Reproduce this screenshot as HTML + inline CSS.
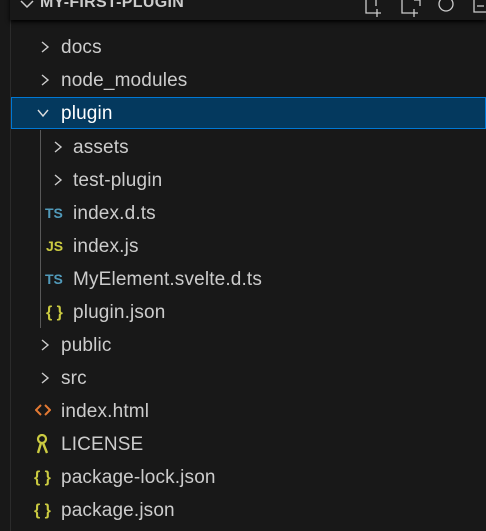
<!DOCTYPE html>
<html><head><style>
body{margin:0;width:486px;height:531px;background:#181818;overflow:hidden;position:relative;font-family:"Segoe UI","Liberation Sans",sans-serif;color:#cccccc}
.hdr{position:absolute;left:10px;top:-10px;width:476px;height:30px;background:#181818;box-shadow:0 2px 4px #000}
.ht{position:absolute;left:40px;top:-6px;font-weight:bold;font-size:16px;color:#cccccc;letter-spacing:0.3px}
.vl{position:absolute;left:10px;top:0;width:1px;height:531px;background:#2b2b2b}
.guide{position:absolute;left:40px;top:130px;width:1px;height:198px;background:#585858}
.row{position:absolute;left:11px;width:475px;height:33px;font-size:19px;line-height:35px;letter-spacing:0.15px}
.row span{position:absolute}
.sel{background:#04395e;outline:1px solid #0078d4;outline-offset:-1px}
.ch{width:12px;height:12px}
.ic{font-weight:bold;font-size:14px;letter-spacing:0}
</style></head><body>
<div class="vl"></div>
<div class="hdr"></div>
<svg style="position:absolute;left:20px;top:0" width="14" height="10"><path d="M1 1 L7 7 L13 1" stroke="#ccc" stroke-width="1.5" fill="none"/></svg>
<div class="ht">MY-FIRST-PLUGIN</div>
<svg style="position:absolute;left:364px;top:0" width="122" height="18" fill="none" stroke="#ccc" stroke-width="1.3">
<path d="M2 0 V13 H10 M12 0 V6 M13 9 V17 M9 13 H17"/>
<path d="M38 0 V13 H46 M50 0 H56 V6 M50 9 V17 M46 13 H54"/>
<circle cx="82" cy="4" r="7"/>
<path d="M110 0 V12 H122 M113 6 H120"/>
</svg>
<div class="guide"></div>

<div class="row" style="top:30px"><svg class="ch" style="position:absolute;left:28px;top:11px" viewBox="0 0 12 12"><path d="M3 1 L9 6 L3 11" stroke="#ccc" stroke-width="1.4" fill="none"/></svg><span style="left:50px">docs</span></div>
<div class="row" style="top:63px"><svg class="ch" style="position:absolute;left:28px;top:11px" viewBox="0 0 12 12"><path d="M3 1 L9 6 L3 11" stroke="#ccc" stroke-width="1.4" fill="none"/></svg><span style="left:50px">node_modules</span></div>
<div class="row sel" style="top:97px;height:32px;line-height:34px;color:#fff"><svg class="ch" style="position:absolute;left:26px;top:10px" viewBox="0 0 12 12"><path d="M1 3 L6 9 L11 3" stroke="#ddd" stroke-width="1.4" fill="none"/></svg><span style="left:50px">plugin</span></div>
<div class="row" style="top:130px"><svg class="ch" style="position:absolute;left:41px;top:11px" viewBox="0 0 12 12"><path d="M3 1 L9 6 L3 11" stroke="#ccc" stroke-width="1.4" fill="none"/></svg><span style="left:62px">assets</span></div>
<div class="row" style="top:163px"><svg class="ch" style="position:absolute;left:41px;top:11px" viewBox="0 0 12 12"><path d="M3 1 L9 6 L3 11" stroke="#ccc" stroke-width="1.4" fill="none"/></svg><span style="left:62px">test-plugin</span></div>
<div class="row" style="top:196px"><span class="ic" style="left:34px;color:#519aba">TS</span><span style="left:62px">index.d.ts</span></div>
<div class="row" style="top:229px"><span class="ic" style="left:35px;color:#cbcb41">JS</span><span style="left:62px">index.js</span></div>
<div class="row" style="top:262px"><span class="ic" style="left:34px;color:#519aba">TS</span><span style="left:62px">MyElement.svelte.d.ts</span></div>
<div class="row" style="top:295px"><span class="ic" style="left:35px;color:#cbcb41;font-size:16px">{ }</span><span style="left:62px">plugin.json</span></div>
<div class="row" style="top:328px"><svg class="ch" style="position:absolute;left:28px;top:11px" viewBox="0 0 12 12"><path d="M3 1 L9 6 L3 11" stroke="#ccc" stroke-width="1.4" fill="none"/></svg><span style="left:50px">public</span></div>
<div class="row" style="top:361px"><svg class="ch" style="position:absolute;left:28px;top:11px" viewBox="0 0 12 12"><path d="M3 1 L9 6 L3 11" stroke="#ccc" stroke-width="1.4" fill="none"/></svg><span style="left:50px">src</span></div>
<div class="row" style="top:394px"><svg style="position:absolute;left:24px;top:10px" width="16" height="12"><path d="M6 1 L1 6 L6 11 M10 1 L15 6 L10 11" stroke="#e37933" stroke-width="2" fill="none"/></svg><span style="left:50px">index.html</span></div>
<div class="row" style="top:427px"><svg style="position:absolute;left:25px;top:7px" width="14" height="20"><circle cx="6" cy="5" r="4" fill="none" stroke="#cbcb41" stroke-width="2.2"/><path d="M5 9 L2 19 M7 9 L11 19" stroke="#cbcb41" stroke-width="2.4"/></svg><span style="left:50px">LICENSE</span></div>
<div class="row" style="top:460px"><span class="ic" style="left:23px;color:#cbcb41;font-size:16px">{ }</span><span style="left:50px">package-lock.json</span></div>
<div class="row" style="top:493px"><span class="ic" style="left:23px;color:#cbcb41;font-size:16px">{ }</span><span style="left:50px">package.json</span></div>
</body></html>
